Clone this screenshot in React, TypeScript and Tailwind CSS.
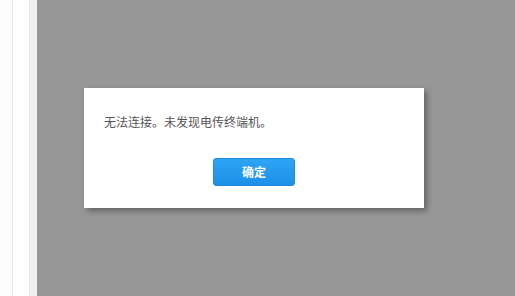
export default function App() {
  return (
    <div
      className="flex h-[296px] w-[515px] overflow-hidden bg-white"
      style={{ fontFamily: '"Microsoft YaHei", "Noto Sans CJK SC", "Liberation Sans", sans-serif' }}
    >
      <div className="w-[12px] shrink-0 bg-[#fdfdfd]" />
      <div className="w-px shrink-0 bg-[#e4e4e4]" />
      <div className="w-[16px] shrink-0 bg-white" />
      <div className="w-[8px] shrink-0 border-l border-[#e6e6e6] bg-[#f0f0f0]" />
      <div className="flex flex-1 flex-col bg-[#979797] pl-[47px] pt-[88px]">
        <div className="flex h-[120px] w-[340px] flex-col bg-white px-[20px] pt-[26px] shadow-[3px_3px_6px_rgba(0,0,0,0.35)]">
          <p className="text-[12px] leading-[16px] text-[#555555]">无法连接。未发现电传终端机。</p>
          <div className="mt-[28px] flex justify-center">
            <button className="h-[28px] w-[82px] rounded-[3px] border border-[#1f8ad8] bg-gradient-to-b from-[#2ea5f5] to-[#1c90e6] text-[12px] font-semibold text-white">
              确定
            </button>
          </div>
        </div>
      </div>
    </div>
  )
}
